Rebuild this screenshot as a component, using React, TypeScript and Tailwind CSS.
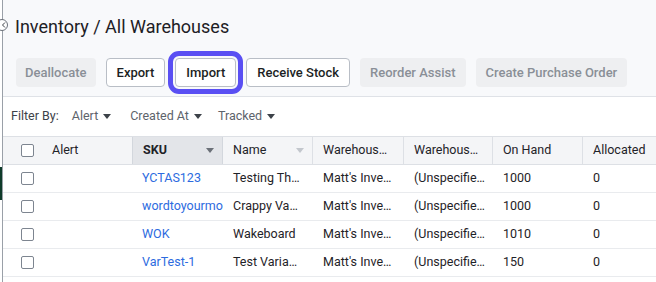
import React from 'react';

type Row = { sku: string; name: string; wh: string; loc: string; onHand: string; allocated: string };

const rows: Row[] = [
  { sku: 'YCTAS123', name: 'Testing Th…', wh: "Matt's Inve…", loc: '(Unspecifie…', onHand: '1000', allocated: '0' },
  { sku: 'wordtoyourmo', name: 'Crappy Va…', wh: "Matt's Inve…", loc: '(Unspecifie…', onHand: '1000', allocated: '0' },
  { sku: 'WOK', name: 'Wakeboard', wh: "Matt's Inve…", loc: '(Unspecifie…', onHand: '1010', allocated: '0' },
  { sku: 'VarTest-1', name: 'Test Varia…', wh: "Matt's Inve…", loc: '(Unspecifie…', onHand: '150', allocated: '0' },
];

const Caret = ({ className = '' }: { className?: string }) => (
  <svg width="8" height="5" viewBox="0 0 8 5" className={className}>
    <path d="M0 0 L8 0 L4 5 Z" fill="currentColor" />
  </svg>
);

const Checkbox = () => (
  <span className="block w-[13px] h-[13px] rounded-[2px] border border-[#7d8590] bg-white" />
);

const ActionButton = ({ label, disabled, focused, tight }: { label: string; disabled?: boolean; focused?: boolean; tight?: boolean }) => {
  const base = `shrink-0 whitespace-nowrap h-[29px] ${tight ? 'px-[9px]' : 'px-[10px]'} rounded-[4px] text-[13px] font-medium`;
  if (disabled) return <button className={`${base} bg-[#eeeff1] text-[#8a8f97]`}>{label}</button>;
  return (
    <button
      className={
        focused
          ? `${base} bg-white border border-[#b9bec6] text-[#1c1f24] outline-[5px] outline-solid outline-[#5a4ff3] outline-offset-[2px]`
          : `${base} bg-white border border-[#b9bec6] text-[#1c1f24]`
      }
    >
      {label}
    </button>
  );
};

export default function App() {
  return (
    <div className="relative flex w-[656px] h-[282px] overflow-hidden bg-white" style={{ fontFamily: 'Roboto, "Liberation Sans", sans-serif' }}>
      {/* left rail */}
      <div className="w-[2px] flex flex-col">
        <div className="h-[167px]" />
        <div className="h-[33px] bg-[#0f3b2a]" />
      </div>
      <div className="absolute left-[-4px] top-[19px] w-[12px] h-[12px] rounded-full border border-[#6b7079] bg-white flex items-center justify-center">
        <svg width="6" height="6" viewBox="0 0 6 6" className="ml-[3px]">
          <path d="M4 0.5 L1.5 3 L4 5.5" fill="none" stroke="#3b3f45" strokeWidth="1" />
        </svg>
      </div>

      <div className="flex-1 flex flex-col border-l border-[#9aa0a8] min-w-0">
        {/* header */}
        <div className="bg-[#f8f9fb] border-b border-[#dfe2e7] pl-[12px] h-[97px]">
          <h1 className="pt-[15px] text-[18px] leading-[24px] text-[#1d2025]">Inventory / All Warehouses</h1>
          <div className="flex items-center gap-[10px] mt-[19px] pl-[1px]">
            <ActionButton label="Deallocate" disabled tight />
            <ActionButton label="Export" />
            <ActionButton label="Import" focused />
            <ActionButton label="Receive Stock" />
            <ActionButton label="Reorder Assist" disabled />
            <ActionButton label="Create Purchase Order" disabled />
          </div>
        </div>

        {/* filters */}
        <div className="h-[39px] flex items-center pl-[8px] text-[12.5px] text-[#5d636b]">
          <span className="text-[#3d4249]">Filter By:</span>
          <span className="ml-[13px] flex items-center gap-[5px]">Alert <Caret className="text-[#3d4249]" /></span>
          <span className="ml-[19px] flex items-center gap-[5px]">Created At <Caret className="text-[#3d4249]" /></span>
          <span className="ml-[16px] flex items-center gap-[5px]">Tracked <Caret className="text-[#3d4249]" /></span>
        </div>

        {/* table */}
        <div className="text-[12.5px] text-[#1f2328]">
          <div className="flex h-[29px] bg-[#f4f5f7] border-y border-[#dde0e5]">
            <div className="w-[39px] flex items-center pl-[18px]"><Checkbox /></div>
            <div className="w-[90px] flex items-center pl-[10px]">Alert</div>
            <div className="w-[91px] flex items-center justify-between pl-[10px] pr-[8px] bg-[#e3e5e9] border-x border-[#d3d7dd] font-bold">
              SKU <Caret className="text-[#6b7078]" />
            </div>
            <div className="w-[90px] flex items-center justify-between pl-[10px] pr-[8px] border-r border-[#dde0e5]">
              Name <Caret className="text-[#c3c7cd]" />
            </div>
            <div className="w-[91px] flex items-center pl-[10px] border-r border-[#dde0e5]">Warehous…</div>
            <div className="w-[89px] flex items-center pl-[10px] border-r border-[#dde0e5]">Warehous…</div>
            <div className="w-[90px] flex items-center pl-[10px] border-r border-[#dde0e5]">On Hand</div>
            <div className="flex-1 flex items-center pl-[10px]">Allocated</div>
          </div>
          {rows.map((r) => (
            <div key={r.sku} className="flex h-[28px] border-b border-[#e9ebee]">
              <div className="w-[39px] flex items-center pl-[18px]"><Checkbox /></div>
              <div className="w-[90px]" />
              <div className="w-[91px] flex items-center pl-[10px] text-[#2d6be0] whitespace-nowrap overflow-hidden">{r.sku}</div>
              <div className="w-[90px] flex items-center pl-[10px] whitespace-nowrap overflow-hidden">{r.name}</div>
              <div className="w-[91px] flex items-center pl-[10px] whitespace-nowrap overflow-hidden">{r.wh}</div>
              <div className="w-[89px] flex items-center pl-[10px] whitespace-nowrap overflow-hidden">{r.loc}</div>
              <div className="w-[90px] flex items-center pl-[10px]">{r.onHand}</div>
              <div className="flex-1 flex items-center pl-[10px]">{r.allocated}</div>
            </div>
          ))}
        </div>
      </div>
    </div>
  );
}
